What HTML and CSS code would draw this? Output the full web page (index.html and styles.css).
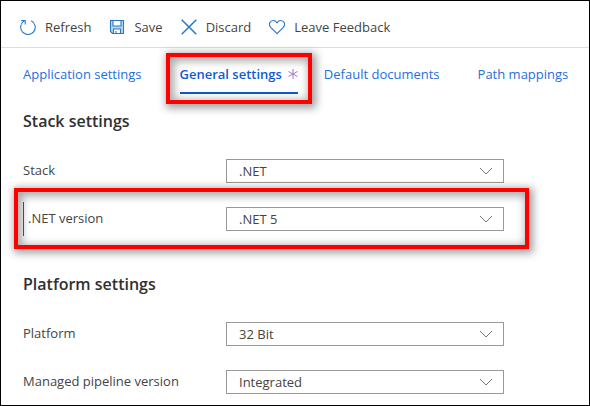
FILE: index.html
```html
<!DOCTYPE html>
<html lang="en">
<head>
<meta charset="utf-8">
<title>Configuration</title>
<link rel="stylesheet" href="styles.css">
</head>
<body>
<main class="page">
  <div class="toolbar">
    <button class="command" type="button">
      <svg class="icon" viewBox="0 0 16 16" aria-hidden="true"><path d="M11.2 1.7A7.3 7.3 0 1 1 4 2.1M1.2 1.6H5.2V5.6"/></svg>
      Refresh
    </button>
    <button class="command" type="button">
      <svg class="icon" viewBox="0 0 16 16" aria-hidden="true"><path class="tint" d="M1.5 1.5h13v13h-11l-2-2z"/><path class="hole" d="M4 1.5h8v5.500H4zM4.500 10h7v4.500h-7z"/><path d="M7 12v2.500"/></svg>
      Save
    </button>
    <button class="command" type="button">
      <svg class="icon cross" viewBox="0 0 16 16" aria-hidden="true"><path d="M.7.7l14.600 14.600M15.300.7L.7 15.300"/></svg>
      Discard
    </button>
    <button class="command" type="button">
      <svg class="icon" viewBox="0 0 16 16" aria-hidden="true"><path d="M8 14.600L1.700 8.300C-1 5.300 1 1.500 4.400 1.500C6.100 1.500 7.200 2.500 8 3.700C8.800 2.500 9.900 1.500 11.600 1.500C15 1.500 17 5.300 14.300 8.300Z"/></svg>
      Leave Feedback
    </button>
  </div>

  <nav class="tabs">
    <a class="tab" href="#application">Application settings</a>
    <a class="tab active callout" href="#general">General settings
      <svg class="changed" viewBox="0 0 10 10" aria-hidden="true"><path d="M5 0v10M.5 2.500l9 5M9.500 2.500l-9 5"/></svg>
    </a>
    <a class="tab" href="#documents">Default documents</a>
    <a class="tab" href="#paths">Path mappings</a>
  </nav>

  <form class="settings">
    <section class="group">
      <h2>Stack settings</h2>
      <div class="row">
        <label for="stack">Stack</label>
        <div class="field"><select id="stack"><option>.NET</option></select><svg class="chevron" viewBox="0 0 14 8" aria-hidden="true"><path d="M1 1l6 6 6-6"/></svg></div>
      </div>
      <div class="row modified callout">
        <label for="version">.NET version</label>
        <div class="field"><select id="version"><option>.NET 5</option></select><svg class="chevron" viewBox="0 0 14 8" aria-hidden="true"><path d="M1 1l6 6 6-6"/></svg></div>
      </div>
    </section>
    <section class="group">
      <h2>Platform settings</h2>
      <div class="row">
        <label for="platform">Platform</label>
        <div class="field"><select id="platform"><option>32 Bit</option></select><svg class="chevron" viewBox="0 0 14 8" aria-hidden="true"><path d="M1 1l6 6 6-6"/></svg></div>
      </div>
      <div class="row">
        <label for="pipeline">Managed pipeline version</label>
        <div class="field"><select id="pipeline"><option>Integrated</option></select><svg class="chevron" viewBox="0 0 14 8" aria-hidden="true"><path d="M1 1l6 6 6-6"/></svg></div>
      </div>
    </section>
  </form>
</main>
</body>
</html>
```
FILE: styles.css
```css
* {
  box-sizing: border-box;
}

body {
  margin: 0;
  background: #fff;
  color: #444;
  font: 13px/20px "Segoe UI", "Open Sans", "Noto Sans", sans-serif;
}

.page {
  min-height: 100vh;
  border: 1px solid #000;
}

.toolbar {
  display: flex;
  gap: 18px;
  height: 47px;
  padding: 6px 19px 0;
  border-bottom: 1px solid #ddd;
}

.command {
  display: flex;
  align-items: center;
  gap: 9px;
  padding: 0;
  border: 0;
  background: none;
  color: inherit;
  font: inherit;
  white-space: nowrap;
}

.icon {
  width: 16px;
  height: 16px;
  flex: none;
  fill: none;
  stroke: #2878c4;
  stroke-width: 1.1;
}

.cross {
  stroke-width: 1.5;
}

.tint {
  fill: #b9d6ef;
}

.hole {
  fill: #fff;
}

.tabs {
  display: flex;
  gap: 38px;
  padding: 16px 22px 0;
}

.tab {
  height: 30px;
  color: #2370e0;
  text-decoration: none;
  white-space: nowrap;
}

.active {
  display: flex;
  gap: 6px;
  margin-right: -12px;
  border-bottom: 2px solid #0f55cf;
  color: #0f5bd7;
  font-weight: 600;
}

.changed {
  width: 10px;
  height: 10px;
  margin-top: 5px;
  fill: none;
  stroke: #b070c8;
}

.callout {
  position: relative;
}

.callout::after {
  content: "";
  position: absolute;
  border: 4px solid #f00;
  box-shadow: 2px 2px 8px 2px rgba(0, 0, 0, .38), inset 2px 2px 8px 2px rgba(0, 0, 0, .34);
  pointer-events: none;
}

.tab.callout::after {
  inset: -11px -14px -12px;
}

.row.callout::after {
  inset: -9px -25px -8px -9px;
}

.settings {
  padding: 16px 22px 0;
}

.group {
  display: grid;
  gap: 4px;
}

.group + .group {
  margin-top: 32px;
}

h2 {
  margin: 0 0 13px;
  color: #303030;
  font-size: 16px;
  font-weight: 600;
  line-height: 22px;
}

.row {
  display: grid;
  grid-template-columns: 203px minmax(0, 278px);
  align-items: center;
  width: 481px;
  max-width: 100%;
  height: 44px;
}

.row label {
  padding-bottom: 2px;
}

.modified label {
  padding: 6px 0 8px 4px;
  border-left: 1px solid #6b3f86;
}

.field {
  display: grid;
  align-items: center;
}

.field select,
.chevron {
  grid-area: 1 / 1;
}

.field select {
  appearance: none;
  width: 100%;
  height: 24px;
  padding: 0 30px 0 12px;
  border: 1px solid #999;
  border-radius: 0;
  background: #fff;
  color: inherit;
  font: inherit;
}

.chevron {
  justify-self: end;
  width: 14px;
  height: 8px;
  margin-right: 11px;
  fill: none;
  stroke: #777;
  pointer-events: none;
}
```
